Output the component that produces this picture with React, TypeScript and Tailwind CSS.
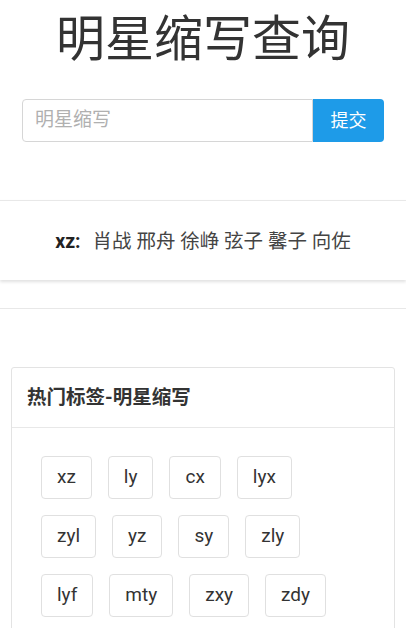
import React from "react";

const rows = [
  ["xz", "ly", "cx", "lyx"],
  ["zyl", "yz", "sy", "zly"],
  ["lyf", "mty", "zxy", "zdy"],
];

export default function App() {
  return (
    <div
      className="w-[406px] h-[628px] overflow-hidden bg-white text-[#333]"
      style={{ fontFamily: 'Roboto, "Noto Sans CJK SC", sans-serif' }}
    >
      <h1 className="pt-[12px] text-center text-[49px] leading-[56px] font-normal text-[#333]">
        明星缩写查询
      </h1>
      <div className="mx-[22px] mt-[31px] flex h-[43px]">
        <input
          className="flex-1 min-w-0 rounded-l-[4px] border border-[#d6d6d6] px-[12px] text-[19px] outline-none placeholder:text-[#b0b0b0]"
          placeholder="明星缩写"
        />
        <button className="w-[71px] rounded-r-[4px] bg-[#1e9be8] text-[18px] text-white">
          提交
        </button>
      </div>
      <div className="mt-[58px] flex h-[80px] items-center justify-center border-t border-[#e8e8e8] pt-[2px] shadow-[0_2px_3px_rgba(0,0,0,0.12)] text-[19.5px]">
        <b className="font-bold text-[#222] mr-[12px]">xz:</b>
        <span className="text-[#444]">肖战 邢舟 徐峥 弦子 馨子 向佐</span>
      </div>
      <div className="mt-[28px] border-t border-[#e8e8e8]" />
      <div className="mx-[11px] mt-[58px] rounded-t-[3px] border border-[#e3e3e3]">
        <div className="flex h-[60px] items-center border-b border-[#e8e8e8] px-[15px] text-[19.5px] font-bold text-[#333]">
          热门标签-明星缩写
        </div>
        <div className="flex flex-col gap-[16px] pl-[29px] pt-[28px] pb-[20px]">
          {rows.map((r, i) => (
            <div key={i} className="flex gap-[16px]">
              {r.map((t) => (
                <span
                  key={t}
                  className="flex h-[43px] items-center rounded-[4px] border border-[#e0e0e0] px-[15px] text-[19px] text-[#333]"
                >
                  {t}
                </span>
              ))}
            </div>
          ))}
        </div>
      </div>
    </div>
  );
}
